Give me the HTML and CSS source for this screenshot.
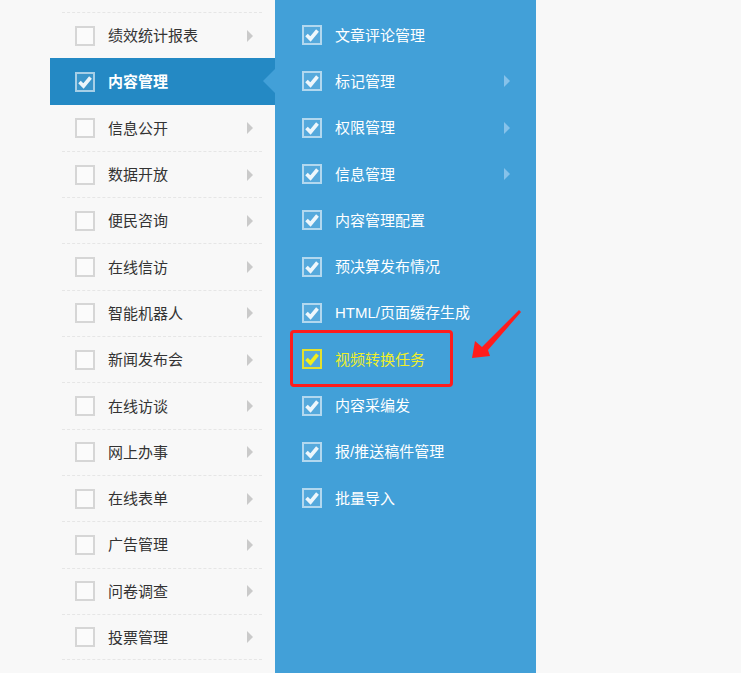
FILE: index.html
```html
<!DOCTYPE html>
<html lang="zh-CN">
<head>
<meta charset="utf-8">
<title>菜单</title>
<link rel="stylesheet" href="styles.css">
</head>
<body>
<div class="page">
  <ul class="menu">
    <li class="item"><div class="inner"><span class="cb"></span><span class="label">绩效统计报表</span><span class="arrow"></span></div></li>
    <li class="item active"><div class="inner"><span class="cb on"><svg viewBox="0 0 16 16"><path d="M2.5 8 L6.5 12 L13.5 3.5"/></svg></span><span class="label">内容管理</span></div></li>
    <li class="item"><div class="inner"><span class="cb"></span><span class="label">信息公开</span><span class="arrow"></span></div></li>
    <li class="item"><div class="inner"><span class="cb"></span><span class="label">数据开放</span><span class="arrow"></span></div></li>
    <li class="item"><div class="inner"><span class="cb"></span><span class="label">便民咨询</span><span class="arrow"></span></div></li>
    <li class="item"><div class="inner"><span class="cb"></span><span class="label">在线信访</span><span class="arrow"></span></div></li>
    <li class="item"><div class="inner"><span class="cb"></span><span class="label">智能机器人</span><span class="arrow"></span></div></li>
    <li class="item"><div class="inner"><span class="cb"></span><span class="label">新闻发布会</span><span class="arrow"></span></div></li>
    <li class="item"><div class="inner"><span class="cb"></span><span class="label">在线访谈</span><span class="arrow"></span></div></li>
    <li class="item"><div class="inner"><span class="cb"></span><span class="label">网上办事</span><span class="arrow"></span></div></li>
    <li class="item"><div class="inner"><span class="cb"></span><span class="label">在线表单</span><span class="arrow"></span></div></li>
    <li class="item"><div class="inner"><span class="cb"></span><span class="label">广告管理</span><span class="arrow"></span></div></li>
    <li class="item"><div class="inner"><span class="cb"></span><span class="label">问卷调查</span><span class="arrow"></span></div></li>
    <li class="item last"><div class="inner"><span class="cb"></span><span class="label">投票管理</span><span class="arrow"></span></div></li>
  </ul>
  <ul class="sub">
    <li class="srow"><span class="cb on"><svg viewBox="0 0 16 16"><path d="M2.5 8 L6.5 12 L13.5 3.5"/></svg></span><span class="label">文章评论管理</span></li>
    <li class="srow"><span class="cb on"><svg viewBox="0 0 16 16"><path d="M2.5 8 L6.5 12 L13.5 3.5"/></svg></span><span class="label">标记管理</span><span class="arrow"></span></li>
    <li class="srow"><span class="cb on"><svg viewBox="0 0 16 16"><path d="M2.5 8 L6.5 12 L13.5 3.5"/></svg></span><span class="label">权限管理</span><span class="arrow"></span></li>
    <li class="srow"><span class="cb on"><svg viewBox="0 0 16 16"><path d="M2.5 8 L6.5 12 L13.5 3.5"/></svg></span><span class="label">信息管理</span><span class="arrow"></span></li>
    <li class="srow"><span class="cb on"><svg viewBox="0 0 16 16"><path d="M2.5 8 L6.5 12 L13.5 3.5"/></svg></span><span class="label">内容管理配置</span></li>
    <li class="srow"><span class="cb on"><svg viewBox="0 0 16 16"><path d="M2.5 8 L6.5 12 L13.5 3.5"/></svg></span><span class="label">预决算发布情况</span></li>
    <li class="srow"><span class="cb on"><svg viewBox="0 0 16 16"><path d="M2.5 8 L6.5 12 L13.5 3.5"/></svg></span><span class="label">HTML/页面缓存生成</span></li>
    <li class="srow hl"><span class="cb on"><svg viewBox="0 0 16 16"><path d="M2.5 8 L6.5 12 L13.5 3.5"/></svg></span><span class="label">视频转换任务</span></li>
    <li class="srow"><span class="cb on"><svg viewBox="0 0 16 16"><path d="M2.5 8 L6.5 12 L13.5 3.5"/></svg></span><span class="label">内容采编发</span></li>
    <li class="srow"><span class="cb on"><svg viewBox="0 0 16 16"><path d="M2.5 8 L6.5 12 L13.5 3.5"/></svg></span><span class="label">报/推送稿件管理</span></li>
    <li class="srow"><span class="cb on"><svg viewBox="0 0 16 16"><path d="M2.5 8 L6.5 12 L13.5 3.5"/></svg></span><span class="label">批量导入</span></li>
  </ul>
</div>
<div class="mark-box"></div>
<svg class="mark-arrow" width="60" height="60" viewBox="0 0 60 60">
  <polygon points="49,10 51,12 18,50 20,56 2,58 5,41 12,47"/>
</svg>
</body>
</html>
```
FILE: styles.css
```css
html, body {
  margin: 0;
  padding: 0;
  background: #f8f8f8;
}
body {
  font-family: "Liberation Sans", "Noto Sans CJK SC", sans-serif;
  font-size: 15px;
  color: #333;
  height: 673px;
  overflow: hidden;
  position: relative;
}
.page {
  display: flex;
  padding-left: 50px;
  height: 673px;
}
ul {
  list-style: none;
  margin: 0;
  padding: 0;
}
.menu {
  width: 225px;
  padding-top: 12px;
}
.item {
  height: 46.3px;
  position: relative;
}
.item .inner {
  margin: 0 13px 0 12px;
  height: 100%;
  box-sizing: border-box;
  border-top: 1px dashed #e6e6e6;
  display: flex;
  align-items: center;
  padding-left: 13px;
  padding-right: 9px;
}
.item.last .inner {
  border-bottom: 1px dashed #e6e6e6;
}
.item.active {
  background: #2489c4;
}
.item.active .inner {
  border-top-color: transparent;
}
.item.active + .item .inner {
  border-top-color: transparent;
}
.item.active .label {
  color: #fff;
  font-weight: bold;
}
.item.active::after {
  content: "";
  position: absolute;
  right: 0;
  top: 50%;
  margin-top: -12px;
  border-style: solid;
  border-width: 12px 12px 12px 0;
  border-color: transparent #42a0d8 transparent transparent;
}
.cb {
  width: 20px;
  height: 20px;
  box-sizing: border-box;
  border: 2px solid #d6d6d6;
  background: #fbfbfb;
  flex: none;
  display: flex;
  align-items: center;
  justify-content: center;
}
.cb svg {
  width: 16px;
  height: 16px;
  fill: none;
  stroke: rgba(255,255,255,0.9);
  stroke-width: 3.6;
}
.cb.on {
  border-color: rgba(255,255,255,0.55);
  background: rgba(255,255,255,0.1);
}
.label {
  margin-left: 13px;
  margin-top: -2px;
  flex: 1;
  white-space: nowrap;
}
.arrow {
  width: 0;
  height: 0;
  border-style: solid;
  border-width: 6px 0 6px 6px;
  border-color: transparent transparent transparent #cacaca;
  flex: none;
}
.sub {
  width: 261px;
  background: #42a0d8;
  padding-top: 12px;
  box-sizing: border-box;
  height: 673px;
}
.srow {
  height: 46.3px;
  display: flex;
  align-items: center;
  padding-left: 27px;
  padding-right: 26px;
  color: #fff;
}
.srow .arrow {
  border-left-color: #86c2ea;
}
.srow.hl .label {
  color: #eeee2a;
}
.srow.hl .cb {
  border-color: #e4e02c;
}
.srow.hl .cb svg {
  stroke: #f2ee1c;
}
.mark-box {
  position: absolute;
  left: 290px;
  top: 330px;
  width: 163px;
  height: 57px;
  box-sizing: border-box;
  border: 3px solid #ff1c1c;
  border-radius: 4px;
}
.mark-arrow {
  position: absolute;
  left: 470px;
  top: 300px;
}
.mark-arrow polygon {
  fill: #ff1c1c;
}
```
